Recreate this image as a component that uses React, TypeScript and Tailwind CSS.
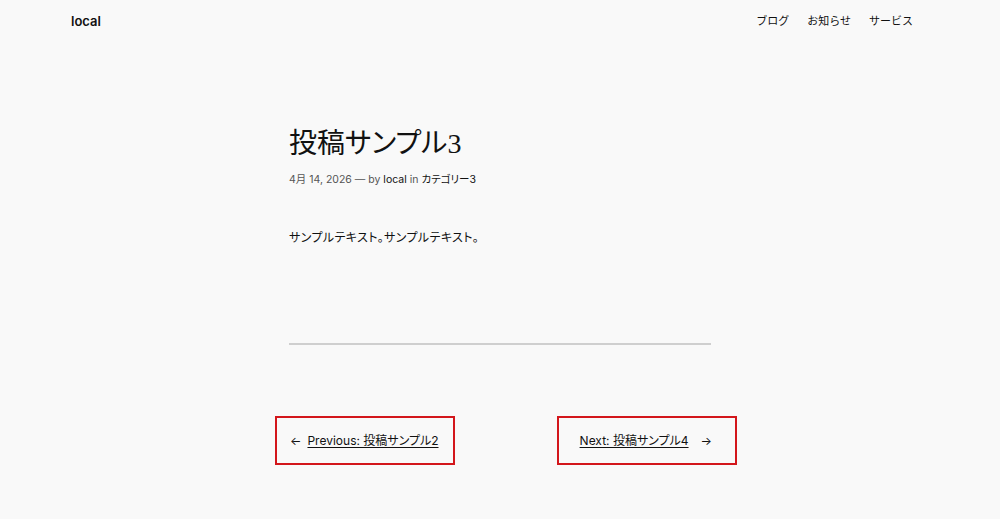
import React from 'react';

const sans = 'font-["Inter","Noto_Sans_CJK_JP",sans-serif]';

function NavLink({ label }: { label: string }) {
  return <span className="text-[11px] text-[#111]">{label}</span>;
}

export default function App() {
  return (
    <div className={`min-h-[519px] bg-[#f9f9f9] text-[#111] ${sans}`}>
      <header className="flex h-[43px] items-center justify-between pl-[71px] pr-[87px]">
        <span className="text-[13px] font-semibold">local</span>
        <nav className="flex gap-[18px]">
          <NavLink label="ブログ" />
          <NavLink label="お知らせ" />
          <NavLink label="サービス" />
        </nav>
      </header>

      <main className="mx-auto w-[422px]">
        <h1 className='mt-[84px] font-["Liberation_Serif","Noto_Sans_CJK_JP",serif] text-[28px] leading-[33px] font-normal [font-feature-settings:"palt"]'>
          投稿サンプル3
        </h1>
        <div className="mt-[12px] text-[10.5px] leading-[16px] [font-feature-settings:'palt']">
          <span className="text-[#555]">4月 14, 2026 — by </span>
          <span>local</span>
          <span className="text-[#555]"> in </span>
          <span>カテゴリー3</span>
        </div>
        <p className="mt-[41px] text-[12px] leading-[18px] tracking-[0.4px] [font-feature-settings:'palt']">
          サンプルテキスト。サンプルテキスト。
        </p>
        <hr className="mt-[96px] border-0 border-t-[2px] border-[#cfcfcf]" />
      </main>

      <div className="mx-auto mt-[71px] flex w-[474px] justify-between pl-3">
        <div className="flex h-[49px] w-[180px] items-center border-2 border-[#d3161b] pl-[13px] text-[12px] [font-feature-settings:'palt']">
          <span className="mr-[6px]">←</span>
          <span className="underline underline-offset-2">Previous: 投稿サンプル2</span>
        </div>
        <div className="flex h-[49px] w-[180px] items-center justify-end border-2 border-[#d3161b] pr-[23px] text-[12px] [font-feature-settings:'palt']">
          <span className="underline underline-offset-2">Next: 投稿サンプル4</span>
          <span className="ml-[12px]">→</span>
        </div>
      </div>
    </div>
  );
}
